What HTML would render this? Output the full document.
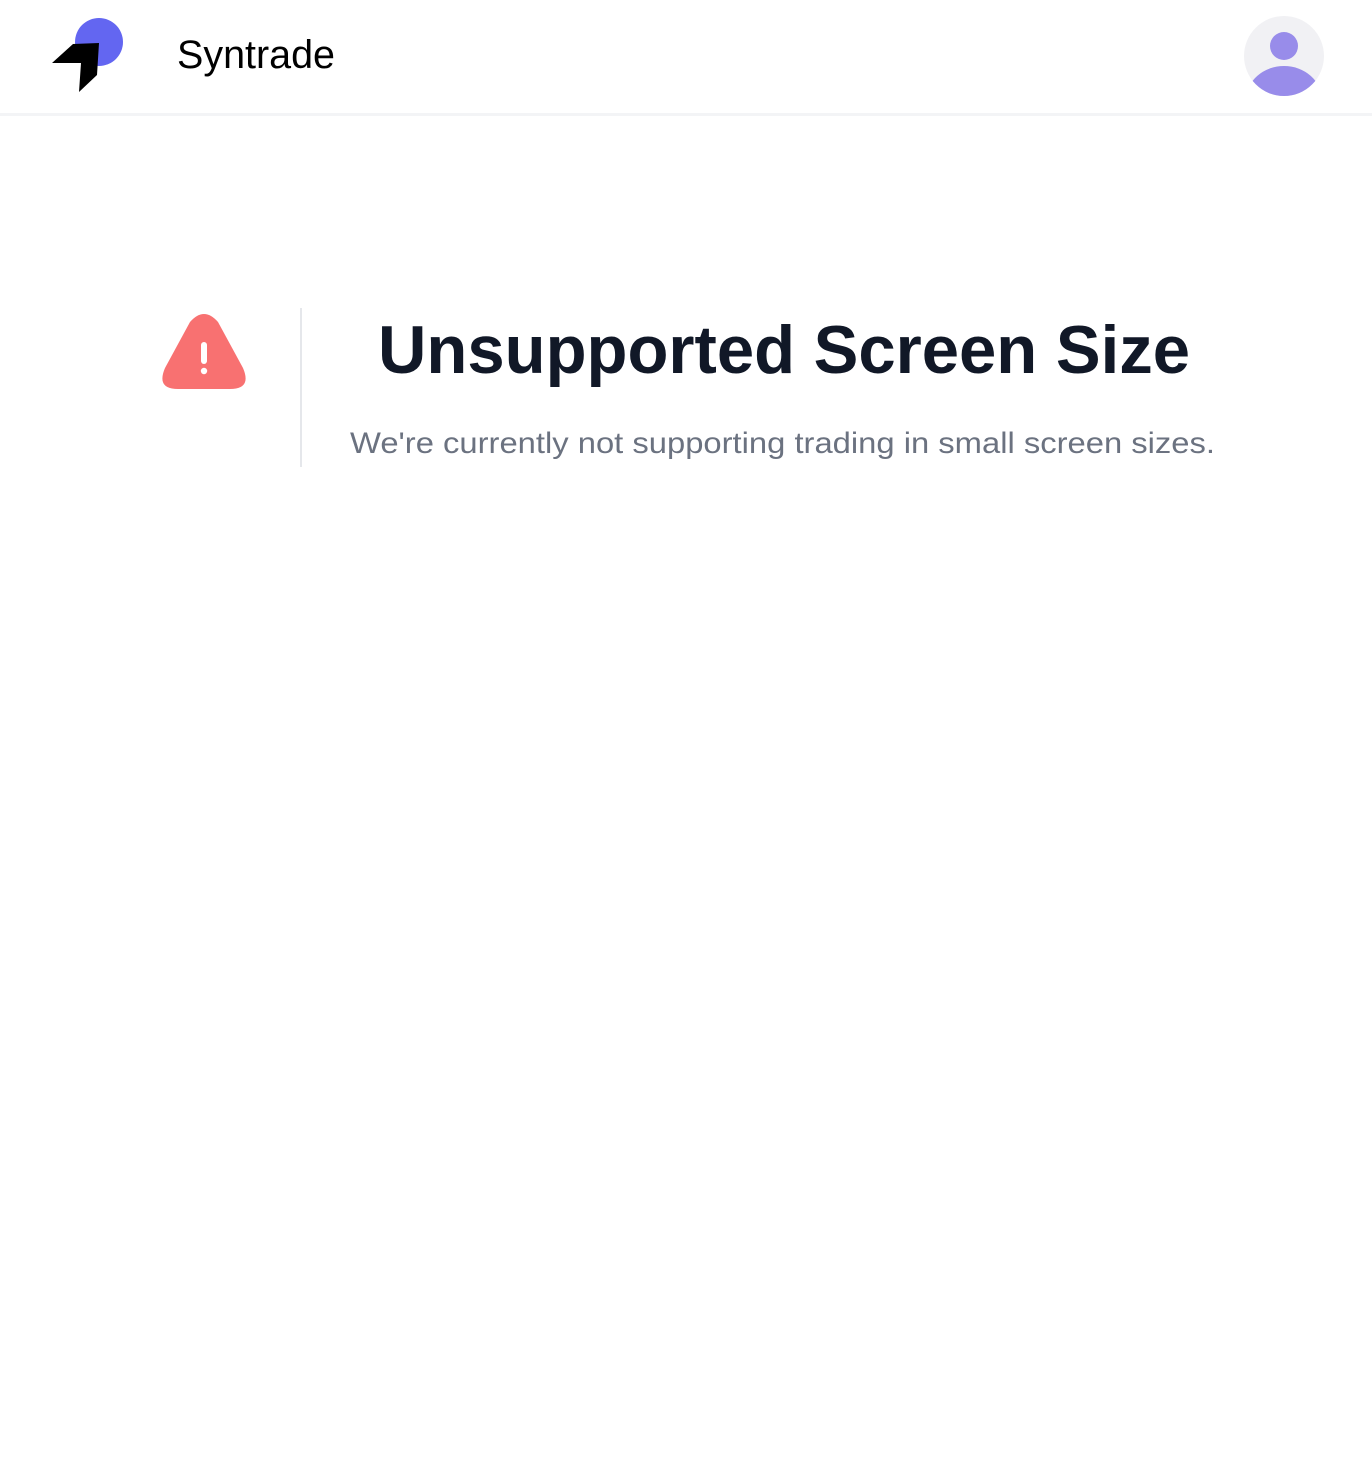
<!DOCTYPE html>
<html><head><meta charset="utf-8"><style>
html,body{margin:0;padding:0;background:#fff;width:1372px;height:1484px;overflow:hidden;font-family:"Liberation Sans",sans-serif}
.hdr{position:absolute;left:0;top:0;width:1372px;height:113px;border-bottom:3px solid #f3f4f6;background:#fff}
</style></head><body>
<div class="hdr"></div>
<svg width="1372" height="1484" style="position:absolute;left:0;top:0">
  <circle cx="99" cy="42" r="24" fill="#6366f1"/>
  <polygon points="52,63 73,44 99,43 97,75 79,92 81,63" fill="#000"/>
  <text x="177" y="68" font-family="Liberation Sans, sans-serif" font-size="40" fill="#000" textLength="158" lengthAdjust="spacingAndGlyphs">Syntrade</text>
  <defs><clipPath id="av"><circle cx="1284" cy="56" r="40"/></clipPath></defs>
  <circle cx="1284" cy="56" r="40" fill="#f1f1f4"/>
  <g clip-path="url(#av)" fill="#988cea">
    <circle cx="1284" cy="46" r="14"/>
    <ellipse cx="1284" cy="100" rx="38" ry="34"/>
  </g>
  <path d="M190,322 Q204,306 218,322 L243,368 Q252,389 230,389 L178,389 Q156,389 165,368 Z" fill="#f87171"/>
  <rect x="201" y="342" width="6" height="22" rx="3" fill="#fff"/>
  <circle cx="204" cy="371" r="3.2" fill="#fff"/>
  <rect x="300" y="308" width="2" height="159" fill="#e5e7eb"/>
  <text x="378" y="373" font-family="Liberation Sans, sans-serif" font-weight="bold" font-size="68" fill="#111827" textLength="812" lengthAdjust="spacingAndGlyphs">Unsupported Screen Size</text>
  <text x="350" y="453" font-family="Liberation Sans, sans-serif" font-size="30" fill="#6b7280" textLength="865" lengthAdjust="spacingAndGlyphs">We're currently not supporting trading in small screen sizes.</text>
</svg>
</body></html>
